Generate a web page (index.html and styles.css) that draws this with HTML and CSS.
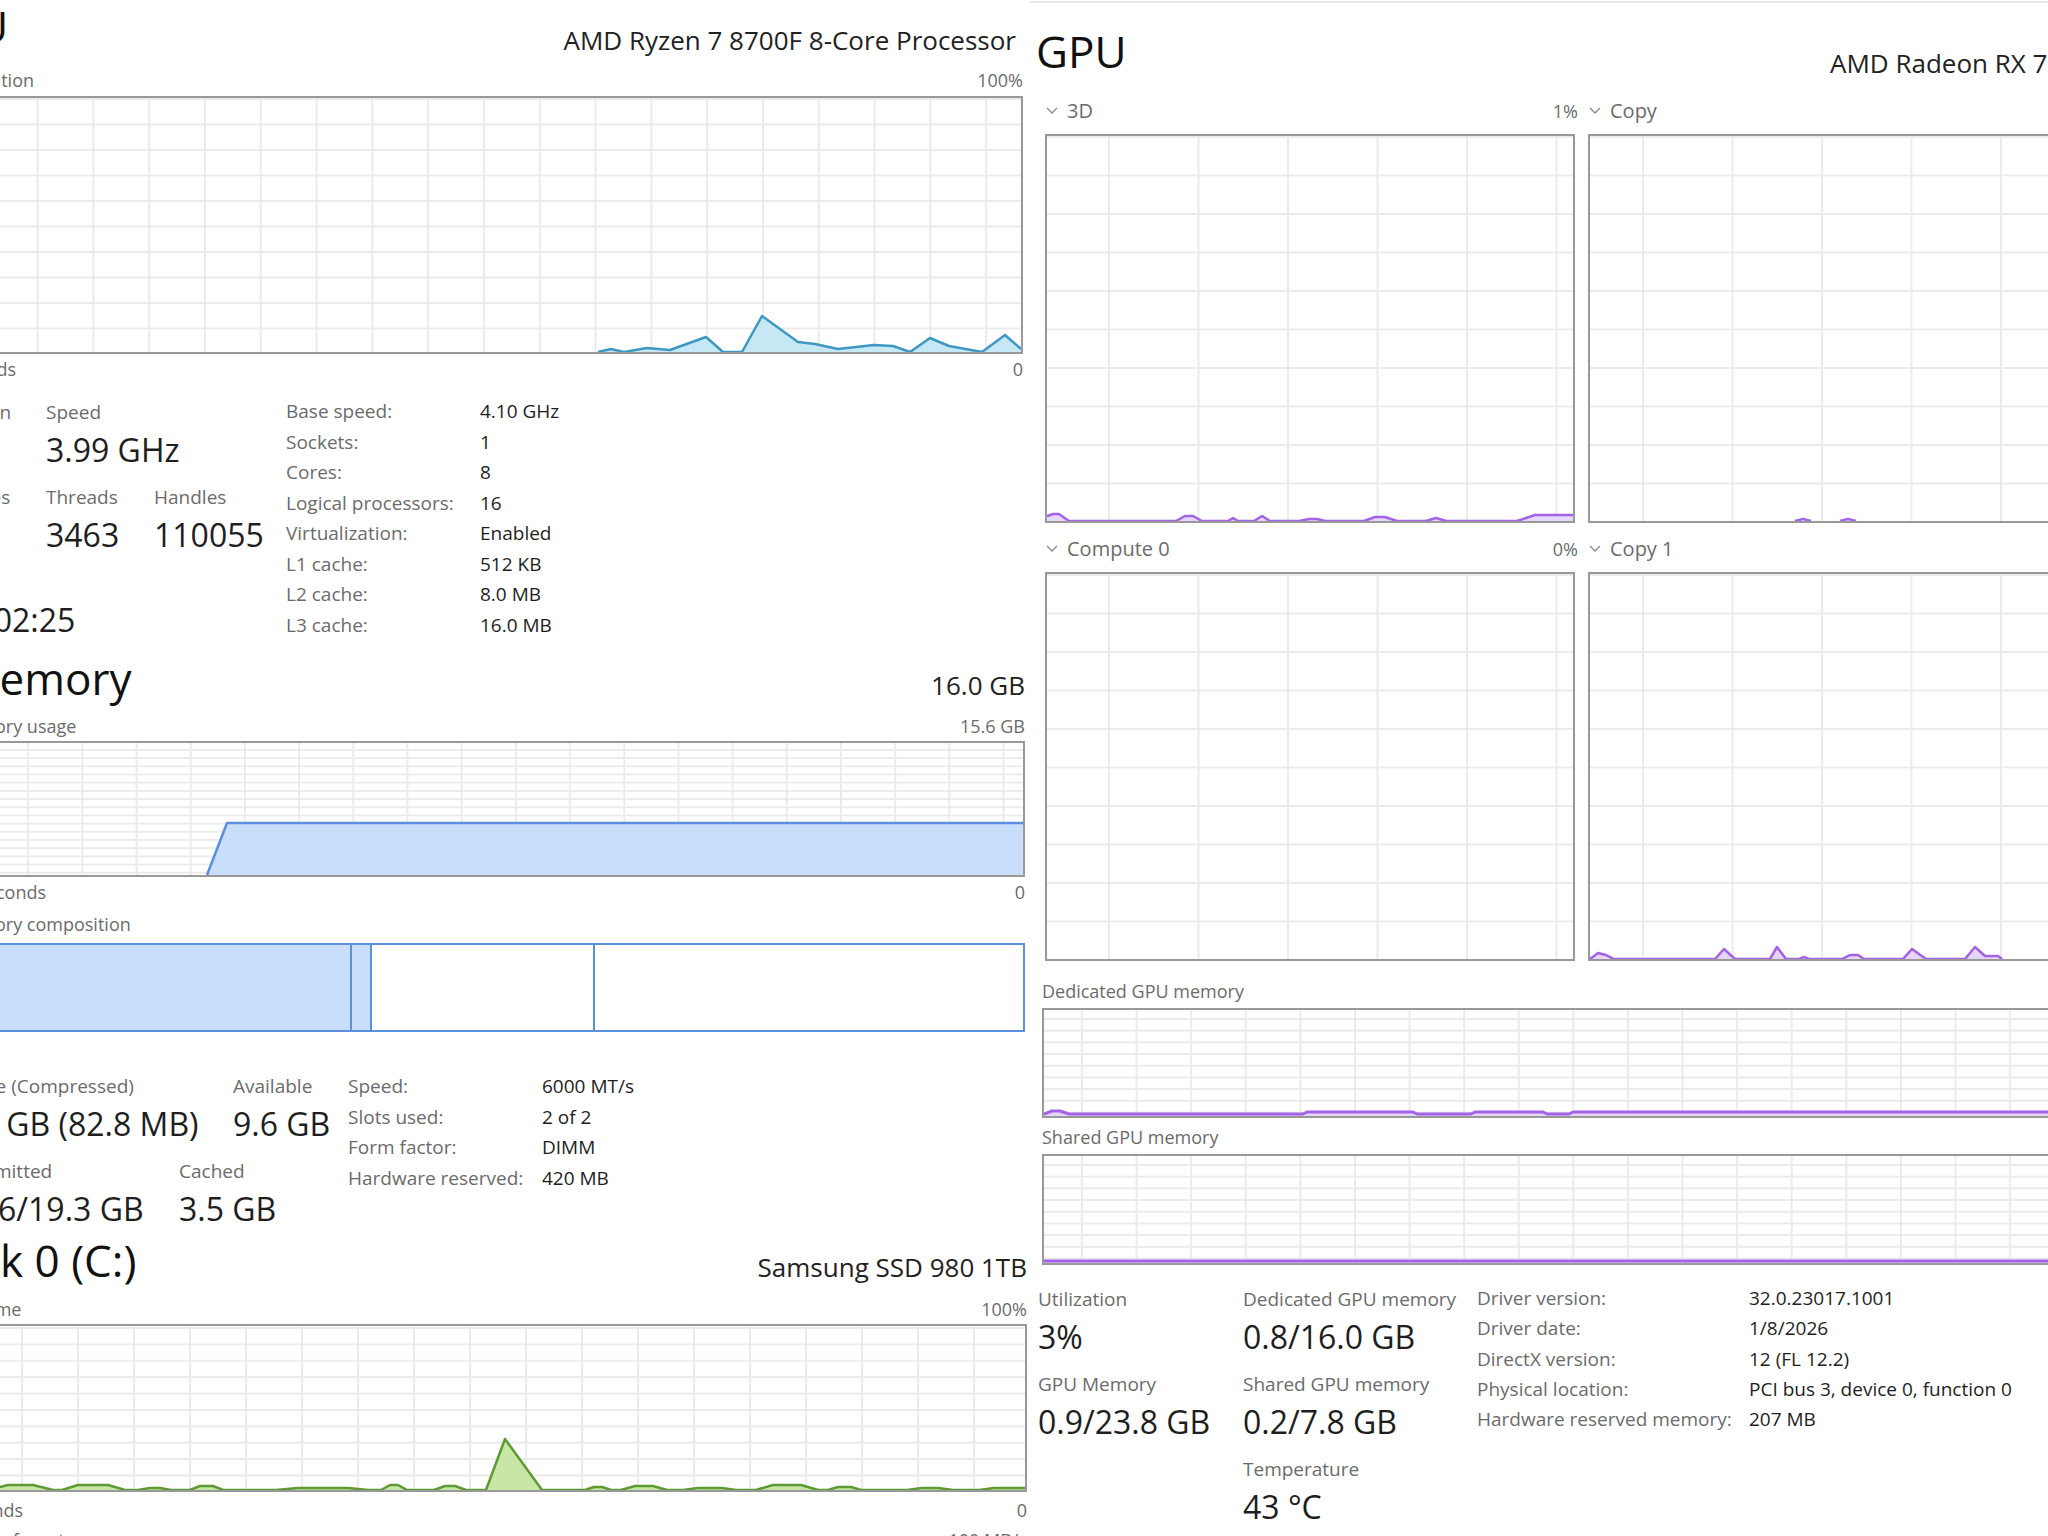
FILE: index.html
```html
<!DOCTYPE html>
<html lang="en">
<head>
    <meta charset="UTF-8">
    <meta name="viewport" content="width=device-width, initial-scale=1.0">
    <title>Performance</title>
    <link rel="stylesheet" href="styles.css">
</head>
<body>
<div class="board">
    <div class="col-left">
        <!-- CPU -->
        <section class="panel panel-cpu">
            <div class="head head-cpu">
                <div class="title">CPU</div>
                <div class="model">AMD Ryzen 7 8700F 8-Core Processor</div>
            </div>
            <div class="axis cap"><span>% Utilization</span><span>100%</span></div>
            <div class="chart chart-cpu">
                <svg viewBox="0 0 1097 254" preserveAspectRatio="none">
                    <polygon class="area" points="0,254 674,254 687,251 700,254 723,250 746,252 782,239 799,254 818,254 838,218 874,244 891,246 914,251 950,247 969,248 986,254 1006,240 1025,248 1058,254 1081,237 1097,251 1097,254"/>
                    <polyline class="line" points="674,254 687,251 700,254 723,250 746,252 782,239 799,254 818,254 838,218 874,244 891,246 914,251 950,247 969,248 986,254 1006,240 1025,248 1058,254 1081,237 1097,251"/>
                </svg>
            </div>
            <div class="axis below"><span>60 seconds</span><span>0</span></div>
            <div class="stats stats-cpu">
                <div class="stat-block">
                    <div class="srow r-speed">
                        <div class="grp"><div class="lbl">Utilization</div><div class="val">3%</div></div>
                        <div class="grp"><div class="lbl">Speed</div><div class="val">3.99 GHz</div></div>
                    </div>
                    <div class="srow r-proc">
                        <div class="grp"><div class="lbl">Processes</div><div class="val">226</div></div>
                        <div class="grp"><div class="lbl">Threads</div><div class="val">3463</div></div>
                        <div class="grp"><div class="lbl">Handles</div><div class="val">110055</div></div>
                    </div>
                    <div class="srow">
                        <div class="grp"><div class="lbl">Up time</div><div class="val">0:03:02:25</div></div>
                    </div>
                </div>
                <div class="info">
                    <div class="k">Base speed:</div><div class="v">4.10 GHz</div>
                    <div class="k">Sockets:</div><div class="v">1</div>
                    <div class="k">Cores:</div><div class="v">8</div>
                    <div class="k">Logical processors:</div><div class="v">16</div>
                    <div class="k">Virtualization:</div><div class="v">Enabled</div>
                    <div class="k">L1 cache:</div><div class="v">512 KB</div>
                    <div class="k">L2 cache:</div><div class="v">8.0 MB</div>
                    <div class="k">L3 cache:</div><div class="v">16.0 MB</div>
                </div>
            </div>
        </section>

        <!-- Memory -->
        <section class="panel panel-mem">
            <div class="head">
                <div class="title">Memory</div>
                <div class="model">16.0 GB</div>
            </div>
            <div class="axis cap"><span>Memory usage</span><span>15.6 GB</span></div>
            <div class="chart chart-mem">
                <svg viewBox="0 0 1061 132" preserveAspectRatio="none">
                    <polygon class="area" points="0,132 245,132 265,80 1061,80 1061,132"/>
                    <polyline class="line" points="245,132 265,80 1061,80"/>
                </svg>
            </div>
            <div class="axis below"><span>60 seconds</span><span>0</span></div>
            <div class="axis comp-cap"><span>Memory composition</span></div>
            <div class="membar">
                <div class="seg-use"></div>
                <div class="seg-mod"></div>
                <div class="seg-stb"></div>
                <div class="seg-free"></div>
            </div>
            <div class="stats stats-mem">
                <div class="stat-block">
                    <div class="srow r-use">
                        <div class="grp"><div class="lbl">In use (Compressed)</div><div class="val">6.0 GB (82.8 MB)</div></div>
                        <div class="grp"><div class="lbl">Available</div><div class="val">9.6 GB</div></div>
                    </div>
                    <div class="srow r-commit">
                        <div class="grp"><div class="lbl">Committed</div><div class="val">10.6/19.3 GB</div></div>
                        <div class="grp"><div class="lbl">Cached</div><div class="val">3.5 GB</div></div>
                    </div>
                </div>
                <div class="info">
                    <div class="k">Speed:</div><div class="v">6000 MT/s</div>
                    <div class="k">Slots used:</div><div class="v">2 of 2</div>
                    <div class="k">Form factor:</div><div class="v">DIMM</div>
                    <div class="k">Hardware reserved:</div><div class="v">420 MB</div>
                </div>
            </div>
        </section>

        <!-- Disk -->
        <section class="panel panel-disk">
            <div class="head">
                <div class="title">Disk 0 (C:)</div>
                <div class="model">Samsung SSD 980 1TB</div>
            </div>
            <div class="axis cap"><span>Active time</span><span>100%</span></div>
            <div class="chart chart-disk">
                <svg viewBox="0 0 1087 164" preserveAspectRatio="none">
                    <polygon class="area" points="0,164 50,164 70,159 95,159 115,164 124,164 140,159 170,159 187,164 200,164 212,162 222,162 233,164 252,164 262,160 275,160 285,164 338,164 360,162 410,162 430,164 443,164 452,159 460,159 469,164 496,164 507,160 517,160 528,164 548,164 567,113 604,164 647,164 656,161 664,161 673,164 683,164 697,160 715,160 729,164 745,164 760,162 784,162 798,164 818,164 835,159 863,159 880,164 890,164 900,161 913,161 923,164 969,164 984,162 1000,162 1015,164 1041,164 1056,162 1087,162 1087,164"/>
                    <polyline class="line" points="0,164 50,164 70,159 95,159 115,164 124,164 140,159 170,159 187,164 200,164 212,162 222,162 233,164 252,164 262,160 275,160 285,164 338,164 360,162 410,162 430,164 443,164 452,159 460,159 469,164 496,164 507,160 517,160 528,164 548,164 567,113 604,164 647,164 656,161 664,161 673,164 683,164 697,160 715,160 729,164 745,164 760,162 784,162 798,164 818,164 835,159 863,159 880,164 890,164 900,161 913,161 923,164 969,164 984,162 1000,162 1015,164 1041,164 1056,162 1087,162"/>
                </svg>
            </div>
            <div class="axis below"><span>60 seconds</span><span>0</span></div>
            <div class="axis rate-cap"><span>Disk transfer rate</span><span>100 MB/s</span></div>
        </section>
    </div>

    <div class="col-right">
        <!-- GPU -->
        <section class="gpu">
            <div class="gpu-head">
                <div class="title">GPU</div>
                <div class="model">AMD Radeon RX 7800 XT</div>
            </div>

            <div class="engines">
                <div class="engine">
                    <div class="engine-cap">
                        <span class="name"><svg class="chev" viewBox="0 0 12 8"><polyline points="1,1 6,6 11,1"/></svg>3D</span>
                        <span class="pct">1%</span>
                    </div>
                    <div class="chart chart-engine">
                        <svg viewBox="0 0 526 385" preserveAspectRatio="none">
                            <polygon class="area" points="0,385 0,380 6,378 12,378 22,385 129,385 138,380 146,380 155,385 181,385 186,382 191,385 207,385 215,380 223,385 252,385 262,383 270,383 278,385 317,385 328,381 338,381 350,385 379,385 389,382 399,385 470,385 488,379 526,379 526,385"/>
                            <polyline class="line" points="0,380 6,378 12,378 22,385 129,385 138,380 146,380 155,385 181,385 186,382 191,385 207,385 215,380 223,385 252,385 262,383 270,383 278,385 317,385 328,381 338,381 350,385 379,385 389,382 399,385 470,385 488,379 526,379"/>
                        </svg>
                    </div>
                </div>
                <div class="engine">
                    <div class="engine-cap">
                        <span class="name"><svg class="chev" viewBox="0 0 12 8"><polyline points="1,1 6,6 11,1"/></svg>Copy</span>
                        <span class="pct">0%</span>
                    </div>
                    <div class="chart chart-engine chart-copy">
                        <svg viewBox="0 0 526 385" preserveAspectRatio="none">
                            <polyline class="line" points="205,385 213,383 221,385"/>
                            <polyline class="line" points="250,385 258,383 266,385"/>
                        </svg>
                    </div>
                </div>
                <div class="engine">
                    <div class="engine-cap">
                        <span class="name"><svg class="chev" viewBox="0 0 12 8"><polyline points="1,1 6,6 11,1"/></svg>Compute 0</span>
                        <span class="pct">0%</span>
                    </div>
                    <div class="chart chart-engine"></div>
                </div>
                <div class="engine">
                    <div class="engine-cap">
                        <span class="name"><svg class="chev" viewBox="0 0 12 8"><polyline points="1,1 6,6 11,1"/></svg>Copy 1</span>
                        <span class="pct">0%</span>
                    </div>
                    <div class="chart chart-engine chart-copy">
                        <svg viewBox="0 0 526 385" preserveAspectRatio="none">
                            <polygon class="area" points="0,385 8,379 16,381 24,385 125,385 134,375 145,385 180,385 187,373 196,385 209,385 214,383 219,385 252,385 260,381 268,381 274,385 313,385 322,375 336,385 375,385 385,373 395,382 408,382 412,385"/>
                            <polyline class="line" points="0,385 8,379 16,381 24,385 125,385 134,375 145,385 180,385 187,373 196,385 209,385 214,383 219,385 252,385 260,381 268,381 274,385 313,385 322,375 336,385 375,385 385,373 395,382 408,382 412,385"/>
                        </svg>
                    </div>
                </div>
            </div>

            <div class="gmem">
                <div class="axis">Dedicated GPU memory</div>
                <div class="chart chart-gmem chart-ded">
                    <svg viewBox="0 0 1130 106" preserveAspectRatio="none">
                        <polygon class="area" points="0,104 8,101 16,101 25,104 259,104 263,102 369,102 373,104 427,104 431,102 499,102 503,104 525,104 529,102 1130,102 1130,106 0,106"/>
                        <polyline class="line" points="0,104 8,101 16,101 25,104 259,104 263,102 369,102 373,104 427,104 431,102 499,102 503,104 525,104 529,102 1130,102"/>
                    </svg>
                </div>
                <div class="axis shared-cap">Shared GPU memory</div>
                <div class="chart chart-gmem chart-shared">
                    <svg viewBox="0 0 1130 107" preserveAspectRatio="none">
                        <polygon class="area" points="0,105 1130,105 1130,107 0,107"/>
                        <polyline class="line" points="0,105 1130,105"/>
                    </svg>
                </div>
            </div>

            <div class="stats stats-gpu">
                <div class="stat-block gpu-cols">
                    <div>
                        <div class="grp"><div class="lbl">Utilization</div><div class="val">3%</div></div>
                        <div class="grp"><div class="lbl">GPU Memory</div><div class="val">0.9/23.8 GB</div></div>
                    </div>
                    <div>
                        <div class="grp"><div class="lbl">Dedicated GPU memory</div><div class="val">0.8/16.0 GB</div></div>
                        <div class="grp"><div class="lbl">Shared GPU memory</div><div class="val">0.2/7.8 GB</div></div>
                        <div class="grp"><div class="lbl">Temperature</div><div class="val">43 °C</div></div>
                    </div>
                </div>
                <div class="info">
                    <div class="k">Driver version:</div><div class="v">32.0.23017.1001</div>
                    <div class="k">Driver date:</div><div class="v">1/8/2026</div>
                    <div class="k">DirectX version:</div><div class="v">12 (FL 12.2)</div>
                    <div class="k">Physical location:</div><div class="v">PCI bus 3, device 0, function 0</div>
                    <div class="k">Hardware reserved memory:</div><div class="v">207 MB</div>
                </div>
            </div>
        </section>
    </div>
</div>
</body>
</html>
```

FILE: styles.css
```css
* {
    box-sizing: border-box;
}
body {
    margin: 0;
    background-color: #fff;
    color: #1e1e1e;
    font-family: "Open Sans", "Noto Sans", sans-serif;
}
.board {
    display: flex;
    width: 2048px;
    height: 1536px;
    overflow: hidden;
}

/* columns of the collage */
.col-left {
    width: 1028px;
    flex: none;
    overflow: hidden;
}
.col-right {
    flex: 1;
    overflow: hidden;
    margin: 1px 0 0 2px;
    border-top: 2px solid #e6e6e6;
    padding: 22px 0 0 6px;
}

.panel {
    overflow: hidden;
}
.panel-cpu {
    height: 648px;
    margin: 0 5px 0 -78px;
}
.panel-mem {
    height: 586px;
    margin: 0 3px 0 -40px;
}
.panel-disk {
    margin: 0 1px 0 -64px;
}

/* headings */
.head {
    display: flex;
    justify-content: space-between;
    align-items: baseline;
}
.head-cpu {
    align-items: flex-start;
}
.head-cpu .model {
    margin: 25px 7px 0 0;
}
.panel-mem .head {
    padding-top: 4px;
}
.title {
    font-size: 44px;
    line-height: 52px;
    color: #111;
}
.model {
    font-size: 26px;
    line-height: 30px;
    color: #222;
}

.axis {
    display: flex;
    justify-content: space-between;
    font-size: 18px;
    line-height: 24px;
    color: #6b6b6b;
    white-space: nowrap;
}
.panel-cpu .cap {
    margin-top: 13px;
}
.panel-cpu .cap span:first-child {
    margin-left: 8px;
}
.panel-mem .cap {
    margin-top: 10px;
}
.panel-mem .axis span:first-child {
    margin-left: -8px;
}
.panel-disk .cap {
    margin-top: 11px;
}
.panel-disk .axis span:first-child {
    margin-left: -7px;
}
.below {
    margin-top: 3px;
}
.panel-disk .below {
    margin-top: 6px;
}
.comp-cap {
    margin-top: 8px;
}
.rate-cap {
    margin-top: 6px;
}

/* graphs */
.chart {
    border: 2px solid #999;
    background-color: #fff;
    background-image: linear-gradient(to right, #ebebeb 2px, transparent 2px),
                      linear-gradient(to bottom, #ebebeb 2px, transparent 2px);
    background-size: var(--gx) 100%, 100% var(--gy);
    background-position: var(--ox) 0, 0 var(--oy);
}
.chart svg {
    display: block;
    width: 100%;
    height: 100%;
}
.line {
    fill: none;
    stroke-width: 2.5;
    stroke-linejoin: round;
    vector-effect: non-scaling-stroke;
}
.chart-cpu {
    height: 258px;
    margin-top: 4px;
    --gx: 55.8px;
    --gy: 25.5px;
    --ox: 1px;
    --oy: 0px;
}
.chart-cpu .area { fill: #c6e7f4; }
.chart-cpu .line { stroke: #3f98c1; }

.chart-mem {
    height: 136px;
    margin-top: 3px;
    --gx: 54.2px;
    --gy: 8.2px;
    --ox: 11px;
    --oy: 6px;
}
.chart-mem .area { fill: #c9defb; }
.chart-mem .line { stroke: #5a8fdf; }

.chart-disk {
    height: 168px;
    margin-top: 3px;
    --gx: 56px;
    --gy: 16.4px;
    --ox: 27px;
    --oy: 1px;
}
.chart-disk .area { fill: #c8e6a5; }
.chart-disk .line { stroke: #5d9a33; }

.membar {
    display: flex;
    height: 89px;
    margin-top: 7px;
    border: 2px solid #5b8fe0;
}
.membar div {
    border-left: 2px solid #5b8fe0;
}
.membar .seg-use {
    width: 388px;
    border-left: none;
    background-color: #c9defb;
}
.seg-mod {
    width: 20px;
    background-color: #c9defb;
}
.seg-stb {
    width: 223px;
}
.seg-free {
    flex: 1;
}

/* numbers under the graphs */
.stats {
    display: flex;
    align-items: flex-start;
}
.stats-cpu {
    margin-top: 18px;
}
.stats-mem {
    margin-top: 41px;
}
.srow {
    display: grid;
    margin-bottom: 9px;
}
.r-speed { grid-template-columns: 124px auto; }
.r-proc { grid-template-columns: 124px 108px auto; }
.r-use { grid-template-columns: 273px auto; }
.r-commit { grid-template-columns: 219px auto; }
.stats-cpu .stat-block { width: 364px; }
.stats-mem .stat-block { width: 388px; }
.stats-mem .srow .grp:first-child {
    margin-left: -7px;
}
.grp .lbl {
    font-size: 19px;
    line-height: 26px;
    color: #6b6b6b;
    white-space: nowrap;
}
.grp .val {
    font-size: 32px;
    line-height: 50px;
    color: #1e1e1e;
    white-space: nowrap;
}
.info {
    display: grid;
    grid-template-columns: 194px auto;
    font-size: 19px;
    line-height: 30.5px;
    margin-top: -3px;
    white-space: nowrap;
}
.stats-mem .info {
    grid-template-columns: 194px auto;
    margin-top: -2px;
}
.info .k { color: #6b6b6b; }
.info .v { color: #1e1e1e; }

/* GPU */
.gpu {
    width: 1140px;
}
.gpu-head {
    display: grid;
    grid-template-columns: 794px auto;
    align-items: start;
}
.gpu-head .model {
    margin-top: 23px;
    white-space: nowrap;
}
.engines {
    display: grid;
    grid-template-columns: 533px 533px;
    column-gap: 10px;
    row-gap: 14px;
    margin: 21px 0 0 9px;
}
.engine-cap {
    display: flex;
    justify-content: space-between;
    align-items: center;
    font-size: 20px;
    line-height: 24px;
    color: #6b6b6b;
}
.engine-cap .pct {
    font-size: 18px;
}
.engine-cap .name {
    display: flex;
    align-items: center;
}
.chev {
    width: 12px;
    height: 8px;
    margin: 0 9px 0 1px;
    fill: none;
    stroke: #888;
    stroke-width: 1.3;
}
.chart-engine {
    height: 389px;
    margin: 11px 3px 0 0;
    --gx: 89.5px;
    --gy: 38.5px;
    --ox: 61px;
    --oy: 0px;
}
.chart-copy {
    --ox: 52px;
}
.chart-engine .area,
.chart-gmem .area { fill: #e6d6fa; }
.chart-engine .line,
.chart-gmem .line { stroke: #a263e6; }

.gmem {
    margin: 18px 0 0 6px;
}
.chart-gmem {
    margin-top: 5px;
    --gx: 54.6px;
    --gy: 11.7px;
    --ox: 37px;
    --oy: 8px;
}
.chart-gmem .line {
    stroke-width: 3;
}
.chart-ded {
    height: 110px;
}
.shared-cap {
    margin-top: 7px;
}
.chart-shared {
    height: 111px;
}
.stats-gpu {
    margin: 21px 0 0 2px;
}
.gpu-cols {
    display: grid;
    grid-template-columns: 205px 234px;
}
.gpu-cols .grp {
    margin-bottom: 9px;
}
.stats-gpu .info {
    grid-template-columns: 272px auto;
    line-height: 30.3px;
}
```
